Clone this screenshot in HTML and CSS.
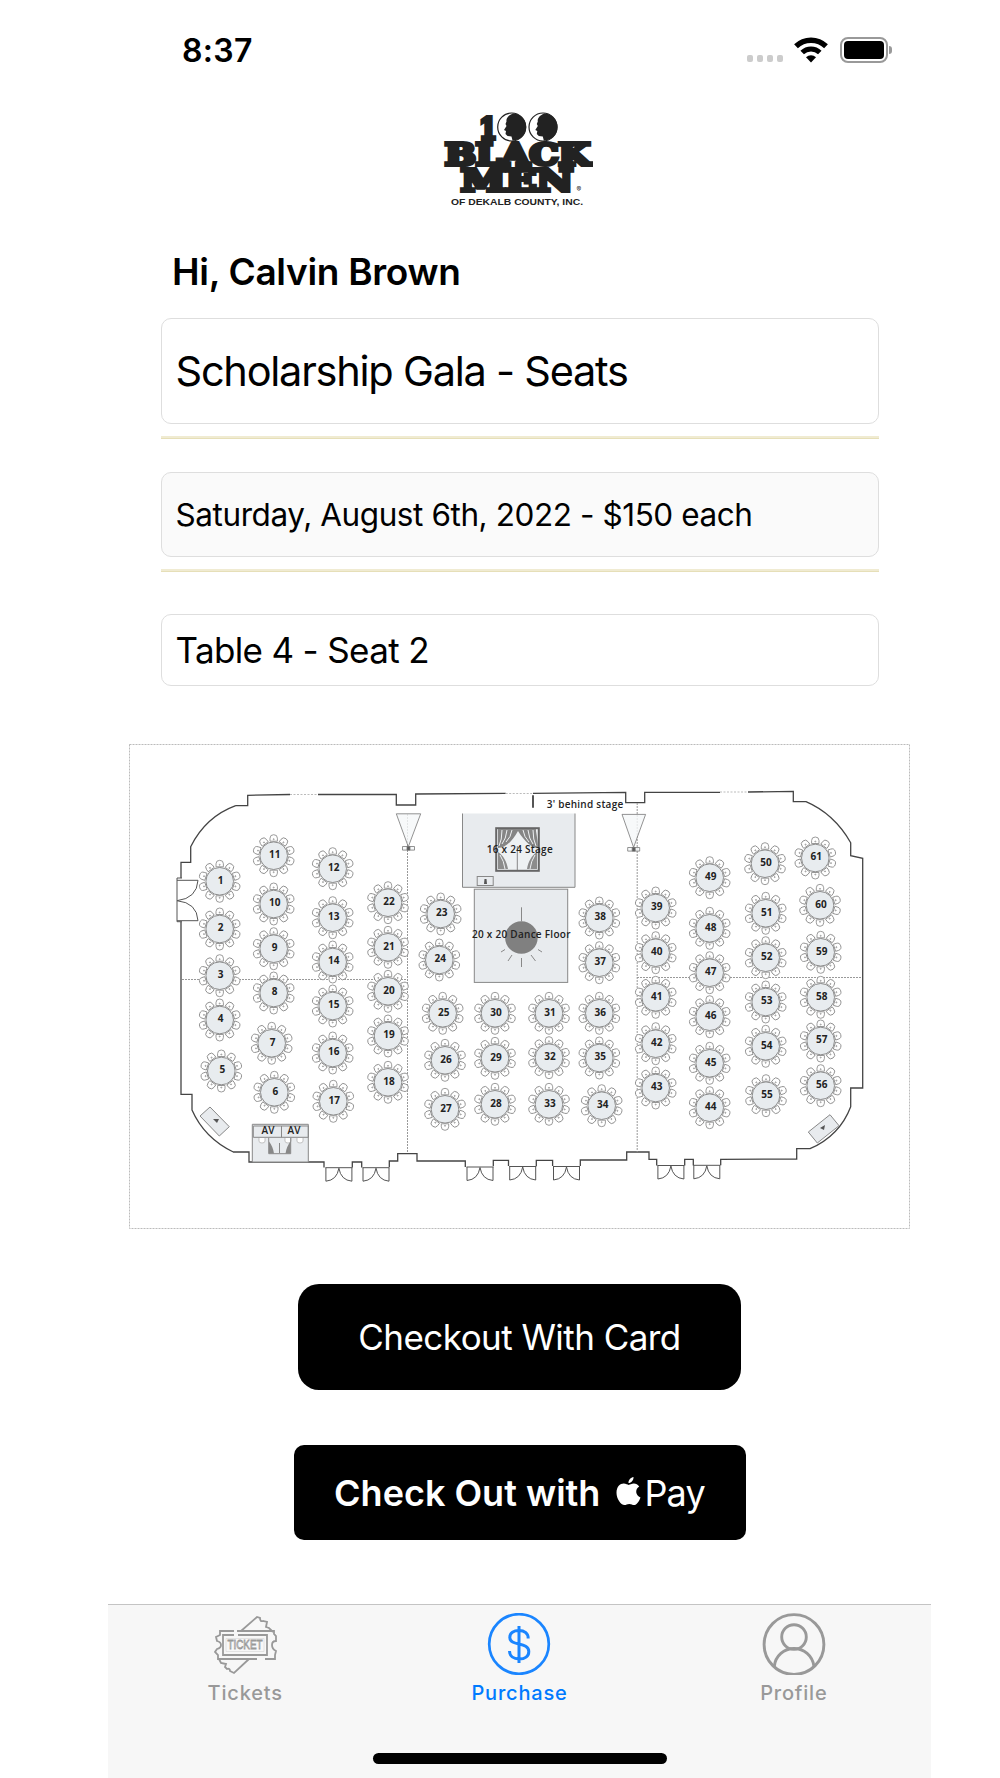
FILE: index.html
```html
<!DOCTYPE html>
<html lang="en">
<head>
    <meta charset="UTF-8">
    <title>Purchase</title>
    <link rel="stylesheet" href="styles.css">
</head>
<body>
    <div class="phone">
        <div class="status-bar">
            <span class="time">8:37</span>
            <div class="status-icons">
                <div class="dots"><i></i><i></i><i></i><i></i></div>
                <svg class="wifi" width="34" height="26" viewBox="0 0 34 26" fill="none" stroke="#000">
                    <path d="M2 9.3a21.5 21.5 0 0 1 30 0" stroke-width="5.4" />
                    <path d="M8.200 15.500a12.600 12.600 0 0 1 17.600 0" stroke-width="5" />
                    <path d="M17 25.500l-5-5.200a7.300 7.300 0 0 1 10 0z" fill="#000" stroke="none" />
                </svg>
                <div class="battery"><div class="level"></div></div>
            </div>
        </div>

        <svg class="logo" width="150" height="96" viewBox="443 111 150 96">
            <g class="slab">
                <text x="479" y="138.500" font-size="29" textLength="18" lengthAdjust="spacingAndGlyphs">1</text>
                <text x="445" y="164.500" font-size="29" textLength="145" lengthAdjust="spacingAndGlyphs">BLACK</text>
                <text x="461" y="191" font-size="29" textLength="112" lengthAdjust="spacingAndGlyphs">MEN</text>
            </g>
            <g fill="#fff" stroke="#222" stroke-width="1.200">
                <circle cx="511.700" cy="127" r="14" />
                <circle cx="543" cy="127" r="14" />
            </g>
            <g fill="#222">
                <path id="face" d="M513 113.500c-5 2-7 5-6.500 8l-1 2.500 1 2-2.500 4 2 1-.5 3 2 2 4 .5 1 4a13.500 13.500 0 0 0 .5-27z" />
                <use href="#face" x="31.300" />
            </g>
            <text x="451" y="204.500" class="county" textLength="132" lengthAdjust="spacingAndGlyphs">OF DEKALB COUNTY, INC.</text>
            <text x="576.500" y="191.500" font-size="7" class="reg">®</text>
        </svg>

        <h1 class="greeting">Hi, Calvin Brown</h1>

        <div class="field event"><span>Scholarship Gala - Seats</span></div>
        <div class="rule"></div>
        <div class="field date"><span>Saturday, August 6th, 2022 - $150 each</span></div>
        <div class="rule"></div>
        <div class="field seat"><span>Table 4 - Seat 2</span></div>

        <svg class="floor-plan" width="782" height="486" viewBox="129 744 782 486">
            <defs>
                <g id="chair">
                    <path d="M-3.700 -14.500v-3q0-3.500 3.700-3.500t3.700 3.500v3z" />
                    <circle cy="-16.500" r=".5" />
                </g>
                <g id="table">
                    <use href="#chair" />
                    <use href="#chair" transform="rotate(36)" />
                    <use href="#chair" transform="rotate(72)" />
                    <use href="#chair" transform="rotate(108)" />
                    <use href="#chair" transform="rotate(144)" />
                    <use href="#chair" transform="rotate(180)" />
                    <use href="#chair" transform="rotate(216)" />
                    <use href="#chair" transform="rotate(252)" />
                    <use href="#chair" transform="rotate(288)" />
                    <use href="#chair" transform="rotate(324)" />
                    <circle r="13.800" class="top" />
                </g>
                <g id="door">
                    <path d="M0 0h27M.5 0v13.500M26.500 0v13.500M.5 13.500q11-1 13-13q2 12 13 13" />
                </g>
            </defs>

            <rect x="129.500" y="744.500" width="780" height="484" class="frame" />

            <g class="wall">
                <path d="M235.700 805.700h12v-10.400l42.300-.8M318 794.500h78.300v10.500h19.400v-11l90-.7M533 793.300l92.700-1v10.400h19v-10.400h75.300M748 792l45.300-.7v10.400h12.700q28 12 44.700 41v13l12 2.600v229.700h-12v18.700q-11 29-40.700 42h-13.300v10.300l-76 .3v6M693.300 1165.500v-6.200h-8.600v6.200M656.700 1165.500v-6.200h-7.700v-7.300h-22.300v8h-46.400v6M552.600 1166v-5.700h-16.300v6M508.500 1166v-5.700h-15.200v6M465.300 1167v-6h-48.300v-7.300h-19.300v7.300h-8.400v6M361.700 1167.500v-5.500h-9.400v5.500M324 1167.500v-5.500h-75v-10h-15.700q-29-14-41.300-42v-15.700h-11v-172.600M181 878v-15.700h9.700v-15.600q15-30 45-41" />
                <path d="M182 878h-5v43.700h5M177 880.300h21q-1 18-21 20.400q20 2 21 20h-21" class="thin" />
            </g>
            <path d="M290 794.500h28M505.700 793.500h27.300M720 792h28" class="gap" />
            <g class="thin">
                <use href="#door" x="325.400" y="1167.700" />
                <use href="#door" x="362.500" y="1167.700" />
                <use href="#door" x="466.500" y="1167" />
                <use href="#door" x="509.200" y="1166.500" />
                <use href="#door" x="553" y="1166.500" />
                <use href="#door" x="657.400" y="1165.500" />
                <use href="#door" x="693.300" y="1165.300" />
            </g>
            <path d="M407.500 814v339M637.200 803v349M182 979.500h225M637 977.500h225" class="divider" />

            <g class="speaker">
                <path d="M396.300 813.800h24.400l-12.400 33zM622 814.400h23.600l-12 33z" />
                <path d="M402.500 846.500h12v3.600h-12zM627.700 847.500h12v3.600h-12z" />
                <path d="M407 846.500h3v3.600h-3zM632.200 847.500h3v3.600h-3z" fill="#333" />
            </g>

            <!-- stage -->
            <rect x="462.300" y="813.500" width="112.700" height="74" fill="#e8ebee" />
            <path d="M462.500 813.500v73.800h112.500v-73.800" class="outline" />
            <rect x="496.200" y="828.200" width="42.600" height="42.600" fill="#eef1f3" stroke="#666" stroke-width="2" />
            <path d="M498 829h38v2c1 6 2 12 2 17-6 0-13-6-20-17-6 11-13 17-20 17z" fill="#858585" />
            <path d="M502 830q0 10-3 16M507 830q-1 9-5 14M512 830q-1 7-6 12M533 830q0 10 3 16M528 830q1 9 5 14M523 830q1 7 6 12" stroke="#eef1f3" fill="none" />
            <path d="M498 869v-17c5 3 9 10 10 17zM537 869v-17c-5 3-9 10-10 17z" fill="#8c8c8c" />
            <path d="M500 855q4 6 5 14M535 855q-4 6-5 14" stroke="#eef1f3" fill="none" />
            <path d="M517.300 846v24" class="outline" />
            <rect x="477.200" y="876.500" width="16" height="9" class="outline" />
            <path d="M484 884h3l-.5-5h-2z" fill="#555" />

            <!-- dance floor -->
            <rect x="474.300" y="889.200" width="93.400" height="93.200" fill="#e8ebee" class="outline" />
            <path d="M521.500 907.300v14" class="outline" />
            <circle cx="521.400" cy="937.500" r="16.300" fill="#808080" />
            <path d="M521.500 958v9M531 955l4.500 6M512 955l-4 6M538 949.500l4 2.500M505 949.500l-4 2.500" class="outline" />

            <!-- av desk -->
            <path d="M252.300 1124.300h56v37.700h-56z" fill="#e8ebee" class="outline" />
            <path d="M253.300 1126h55v11.300h-55zM281.500 1126v11.300" class="outline" />
            <path d="M259 1138v3q0 2 3 2t3-2v-3M285 1138v3q0 2 3 2t3-2v-3M297 1138v3q0 2 3 2t3-2v-3" fill="#fff" stroke="#aaa" stroke-width=".7" />
            <path d="M268.700 1137.700v16h22v-16" class="outline" />
            <path d="M269 1153.500v-12q4 5 5 12zM290.500 1153.500v-12q-4 5-5 12z" fill="#888" />
            <path d="M279.500 1143v10" class="outline" />
            <path d="M210 1107l19.300 19.700-10 9.300-19.300-20zM830 1114.700l9 11-21.700 17.300-9-11z" fill="#e8ebee" class="outline" />
            <path d="M213 1119h6l-2 4zM820 1128l5-3-1 5z" fill="#555" />
            <path d="M533 795.300v12.400" stroke="#555" stroke-width="2" />

            <g class="plan-text">
                <text x="546.700" y="807.800" textLength="76.500">3' behind stage</text>
                <text x="486.700" y="852.800" textLength="66">16 x 24 Stage</text>
                <text x="472" y="937.800" textLength="98.500">20 x 20 Dance Floor</text>
                <text x="261.500" y="1134" textLength="13">AV</text>
                <text x="287.500" y="1134" textLength="13">AV</text>
            </g>
            <g id="tables"></g>
        </svg>

        <button class="card-btn">Checkout With Card</button>
        <button class="apple-btn">
            <span class="check-out">Check Out with</span>
            <svg width="25" height="29" viewBox="0 0 25 29" fill="#fff">
                <path d="M17.500 0c.3 2.900-2.200 6-5 6.100C12.200 3.200 14.900.3 17.500 0zM12.700 7.900c1.300 0 2.800-1.300 5.200-1.300 2 0 4 1 5.300 2.900-4.500 2.700-3.800 9 1.300 10.900-1.500 4-3.900 7.700-6.400 7.700-1.800 0-2.500-1.100-4.800-1.100s-3.100 1.100-4.800 1.100C4.700 28.100.5 21.500.5 15.700c0-6 3.600-9.100 7.200-9.100 2.300 0 3.800 1.300 5 1.300z" />
            </svg>
            <span class="pay">Pay</span>
        </button>

        <div class="tab-bar">
            <div class="tab">
                <svg width="64" height="62" viewBox="0 0 64 62" fill="none" stroke="#999" stroke-width="1.800">
                    <path d="M21 18H7v4l-4 2 1 4q4 1 4 4t-4 4l-2 3 3 3v4h39M52 46h10v-4l1-4q-4-2-4-6t4-4v-5l-2-2v-3H24" />
                    <path d="M21 22H10v20h44V22H25" />
                    <path d="M13 25.500h38v13H13z" stroke="#ddd" stroke-width=".8" />
                    <path d="M28 18L44 4l3 1q0 4 3 3l4 1-1 5 3 1 4 4M36 46L21 60l-4-2q0-3-3-2l-2-2 1-3-5-1-2-4" />
                    <text x="14.500" y="36" class="stub" textLength="35" lengthAdjust="spacingAndGlyphs">TICKET</text>
                </svg>
                <span>Tickets</span>
            </div>
            <div class="tab active">
                <svg width="64" height="62" viewBox="0 0 64 62" fill="none" stroke="#1a85ff" stroke-width="2.700">
                    <circle cx="32" cy="31" r="29.800" />
                    <path d="M41.200 25.500c0-5.500-4-8-9.200-8s-9.200 2.500-9.200 7c0 9 19 4 19 14 0 5-4 7.500-9.600 7.500s-9.700-3-9.700-8M32 13v37" stroke-width="3" />
                </svg>
                <span>Purchase</span>
            </div>
            <div class="tab">
                <svg width="64" height="62" viewBox="0 0 64 62" fill="none" stroke="#999" stroke-width="2.900">
                    <circle cx="32" cy="31.500" r="29.900" />
                    <circle cx="32" cy="24" r="12.300" />
                    <path d="M12.300 53.500c1-11 10-18 19.700-18s18.700 7 20 18" />
                </svg>
                <span>Profile</span>
            </div>
            <div class="home-indicator"></div>
        </div>
    </div>

    <script>
        // number: [x, y] of the middle of each table
        const tables = {
            1: [219.7, 881.3], 2: [219.7, 929], 3: [219.7, 975.7], 4: [219.7, 1020], 5: [221.3, 1071],
            6: [274.3, 1092.3], 7: [271.7, 1043.3], 8: [273.7, 993], 9: [273.7, 948.7], 10: [273.7, 904], 11: [273.7, 855.7],
            12: [332.7, 868.7], 13: [332.7, 917.7], 14: [332.7, 962], 15: [332.7, 1006], 16: [332.7, 1053], 17: [333.3, 1101.3],
            18: [388, 1082.3], 19: [388, 1036], 20: [388, 991.3], 21: [388, 947.3], 22: [388, 902.7],
            23: [440.7, 914], 24: [439.3, 960], 25: [442.7, 1013.3], 26: [445, 1060.3], 27: [445, 1109.3],
            28: [495, 1104.3], 29: [495, 1058.3], 30: [495, 1013.3], 31: [549, 1013.3], 32: [549, 1057.7], 33: [549, 1104.3],
            34: [601.7, 1105.7], 35: [599.3, 1058], 36: [599.3, 1013.3], 37: [599.3, 962.7], 38: [599.3, 918],
            39: [655.7, 908], 40: [655.7, 952.7], 41: [655.7, 997.3], 42: [655.7, 1043.7], 43: [655.7, 1088],
            44: [709.7, 1107.7], 45: [709.7, 1063.3], 46: [709.7, 1016.7], 47: [709.7, 972.7], 48: [709.7, 928.3], 49: [709.7, 877.7],
            50: [765, 863.7], 51: [765.7, 913.3], 52: [765.7, 957.7], 53: [765.7, 1002], 54: [765.7, 1046.3], 55: [766, 1095.7],
            56: [820.7, 1085.7], 57: [820.7, 1041], 58: [820.7, 997.3], 59: [820.7, 952.3], 60: [820, 905.3], 61: [815.3, 858]
        };
        let tablesHTML = "";
        for (const number in tables) {
            const [x, y] = tables[number];
            tablesHTML += `<use href="#table" x="${x}" y="${y}"/><text x="${x + 1}" y="${y + 2.3}">${number}</text>`;
        }
        document.getElementById("tables").innerHTML = tablesHTML;
    </script>
</body>
</html>
```
FILE: styles.css
```css
* {
    box-sizing: border-box;
}
body {
    margin: 0;
    background-color: #fff;
    font-family: Inter, Roboto, "Liberation Sans", sans-serif;
    color: #000;
}
.phone {
    width: 823px;
    height: 1778px;
    margin-left: 108px;
    display: flex;
    flex-direction: column;
    align-items: center;
    overflow: hidden;
}
.status-bar {
    width: 100%;
    height: 100px;
    padding: 0 38px 0 74px;
    display: flex;
    justify-content: space-between;
    align-items: center;
    flex-shrink: 0;
}
.time {
    font-size: 32px;
    font-weight: 600;
    letter-spacing: .3px;
}
.status-icons {
    display: flex;
    align-items: center;
}
.dots {
    display: flex;
    gap: 4px;
    margin-right: 11px;
    padding-top: 17px;
}
.dots i {
    width: 6px;
    height: 7px;
    border-radius: 2px;
    background-color: #ccc;
}
.wifi {
    margin-right: 12px;
}
.battery {
    position: relative;
    width: 48px;
    height: 26px;
    padding: 2px;
    margin-right: 5px;
    border: 2px solid #999;
    border-radius: 8px;
}
.battery::after {
    content: "";
    position: absolute;
    right: -6px;
    top: 7px;
    width: 3px;
    height: 8px;
    border-radius: 0 3px 3px 0;
    background-color: #999;
}
.level {
    height: 100%;
    border-radius: 4px;
    background-color: #000;
}
.logo {
    margin: 11px 0 0 -4px;
    flex-shrink: 0;
}
.slab {
    font-family: "DejaVu Serif", serif;
    font-weight: bold;
    fill: #222;
    stroke: #222;
    stroke-width: 4;
}
.county {
    font-family: "Liberation Sans", sans-serif;
    font-weight: bold;
    font-size: 9.500px;
    fill: #222;
}
.reg {
    fill: #222;
}
.greeting {
    align-self: flex-start;
    margin: 40px 0 0 64px;
    font-size: 37px;
    line-height: 50px;
    font-weight: 600;
    letter-spacing: -.3px;
    white-space: nowrap;
}
.field {
    width: 718px;
    padding-left: 14px;
    display: flex;
    align-items: center;
    border: 1px solid #dedede;
    border-radius: 10px;
    white-space: nowrap;
    flex-shrink: 0;
}
.event {
    height: 106px;
    margin-top: 21px;
    font-size: 41.500px;
    letter-spacing: -1.240px;
}
.date {
    height: 85px;
    margin-top: 33px;
    background-color: #fafafa;
    font-size: 31.500px;
    letter-spacing: -.420px;
}
.seat {
    height: 72px;
    margin-top: 42px;
    font-size: 35px;
    letter-spacing: -.650px;
}
.rule {
    width: 718px;
    height: 3px;
    margin-top: 12px;
    background-color: #f0ebd2;
    border-bottom: 1px solid #e6dfb8;
    flex-shrink: 0;
}
.floor-plan {
    margin-top: 58px;
    flex-shrink: 0;
}
.frame {
    fill: none;
    stroke: #bbb;
    stroke-dasharray: 2 1;
}
.wall {
    fill: none;
    stroke: #444;
    stroke-width: 1.3;
}
.thin {
    fill: none;
    stroke: #555;
    stroke-width: 1;
}
.gap {
    stroke: #bbb;
    stroke-dasharray: 2 1.5;
}
.divider {
    stroke: #999;
    stroke-width: 1;
    stroke-dasharray: 2 1;
}
.speaker {
    fill: #f5f7f9;
    fill-opacity: .8;
    stroke: #777;
    stroke-width: .8;
}
.outline {
    stroke: #888;
    stroke-width: 1;
}
.outline:not([fill]) {
    fill: none;
}
#chair {
    fill: #fff;
    stroke: #909090;
    stroke-width: .9;
}
.top {
    fill: #e8ecef;
    stroke: #808080;
    stroke-width: .9;
}
.plan-text,
#tables text {
    font-family: "Open Sans", "Noto Sans", sans-serif;
    font-size: 10px;
    font-weight: 600;
    fill: #222;
}
#tables text {
    font-weight: 700;
    text-anchor: middle;
}
.card-btn,
.apple-btn {
    border: none;
    background-color: #000;
    color: #fff;
    font-family: inherit;
    flex-shrink: 0;
    white-space: nowrap;
}
.card-btn {
    width: 443px;
    height: 106px;
    margin-top: 54px;
    border-radius: 21px;
    font-size: 35px;
    font-weight: 400;
    letter-spacing: -.550px;
}
.apple-btn {
    width: 452px;
    height: 95px;
    margin-top: 55px;
    padding: 0;
    border-radius: 10px;
    display: flex;
    justify-content: center;
    align-items: center;
    font-size: 36px;
}
.check-out {
    font-weight: 600;
}
.apple-btn svg {
    margin: -3px 3px 0 16px;
}
.pay {
    letter-spacing: -.8px;
}
.tab-bar {
    position: relative;
    width: 100%;
    height: 174px;
    margin-top: 64px;
    display: grid;
    grid-template-columns: repeat(3, 1fr);
    background-color: #f7f7f7;
    border-top: 1px solid #c4c4c4;
    flex-shrink: 0;
}
.tab {
    display: flex;
    flex-direction: column;
    align-items: center;
    padding-top: 8px;
    color: #999;
    font-size: 20px;
    font-weight: 500;
    letter-spacing: .8px;
}
.tab span {
    margin-top: 6px;
    line-height: 24px;
}
.active {
    color: #007aff;
}
.stub {
    font-family: "Liberation Sans", sans-serif;
    font-size: 12px;
    letter-spacing: 0;
    stroke-width: .8;
}
.home-indicator {
    position: absolute;
    left: 265px;
    bottom: 14px;
    width: 294px;
    height: 11px;
    border-radius: 6px;
    background-color: #000;
}
```
